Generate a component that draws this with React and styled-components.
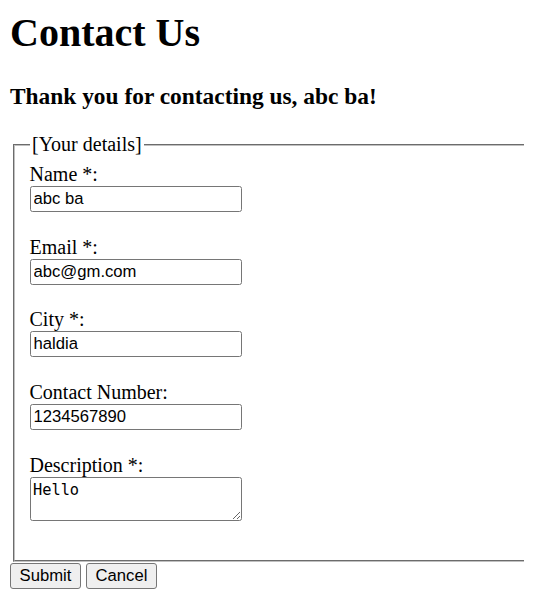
import React from "react";
import styled, { createGlobalStyle } from "styled-components";

const GlobalStyle = createGlobalStyle`
  html {
    overflow: hidden;
  }
  body {
    margin: 10px;
    background: #ffffff;
    color: #000000;
    font-family: "Liberation Serif", "Times New Roman", serif;
    font-size: 20px;
  }
`;

const Title = styled.h1`
  margin: 0 0 26.8px;
  font-size: 40px;
  font-weight: bold;
  line-height: 46px;
`;

const Thanks = styled.h3`
  margin: 0 0 23.4px;
  font-size: 23.4px;
  font-weight: bold;
  line-height: 26.9px;
`;

const Form = styled.form`
  display: flex;
  flex-direction: column;
  align-items: flex-start;
`;

const Fieldset = styled.fieldset`
  box-sizing: border-box;
  width: calc(100% + 7.5px);
  margin: 0 0 0 2.5px;
  padding: 7px 15px 38.8px;
  border: 2px groove #c0c0c0;
  border-right: none;
  min-width: 0;
`;

const Legend = styled.legend`
  padding: 0 2.5px;
  font-size: 20px;
  line-height: 23px;
`;

const Fields = styled.div`
  display: flex;
  flex-direction: column;
  gap: 23.7px;
`;

const Field = styled.div`
  display: flex;
  flex-direction: column;
  align-items: flex-start;
`;

const Label = styled.label`
  font-size: 20px;
  line-height: 23px;
`;

const controlBase = `
  box-sizing: border-box;
  width: 212px;
  margin: 0;
  border: 1px solid #767676;
  border-radius: 2.5px;
  background: #ffffff;
  color: #000000;
`;

const TextInput = styled.input`
  ${controlBase}
  height: 26px;
  padding: 1px 3px;
  font-family: "Liberation Sans", Arial, sans-serif;
  font-size: 16.67px;
`;

const TextArea = styled.textarea`
  ${controlBase}
  height: 44px;
  padding: 3px 2.5px;
  font-family: "DejaVu Sans Mono", "Liberation Mono", monospace;
  font-size: 15.3px;
  line-height: 18px;
`;

const Buttons = styled.div`
  display: flex;
  gap: 5px;
  margin-top: 1px;
`;

const Button = styled.button`
  box-sizing: border-box;
  width: 71px;
  height: 26px;
  margin: 0;
  padding: 1px 0;
  border: 1px solid #767676;
  border-radius: 3px;
  background: #efefef;
  color: #000000;
  font-family: "Liberation Sans", Arial, sans-serif;
  font-size: 16.67px;
`;

const fields = [
  { id: "name", label: "Name *:", value: "abc ba" },
  { id: "email", label: "Email *:", value: "abc@gm.com" },
  { id: "city", label: "City *:", value: "haldia" },
  { id: "contact", label: "Contact Number:", value: "1234567890" },
];

export default function App() {
  return (
    <>
      <GlobalStyle />
      <Title>Contact Us</Title>
      <Thanks>Thank you for contacting us, abc ba!</Thanks>
      <Form onSubmit={(e) => e.preventDefault()}>
        <Fieldset>
          <Legend>[Your details]</Legend>
          <Fields>
            {fields.map((f) => (
              <Field key={f.id}>
                <Label htmlFor={f.id}>{f.label}</Label>
                <TextInput id={f.id} type="text" defaultValue={f.value} />
              </Field>
            ))}
            <Field>
              <Label htmlFor="description">Description *:</Label>
              <TextArea id="description" defaultValue="Hello" />
            </Field>
          </Fields>
        </Fieldset>
        <Buttons>
          <Button type="submit">Submit</Button>
          <Button type="button">Cancel</Button>
        </Buttons>
      </Form>
    </>
  );
}
